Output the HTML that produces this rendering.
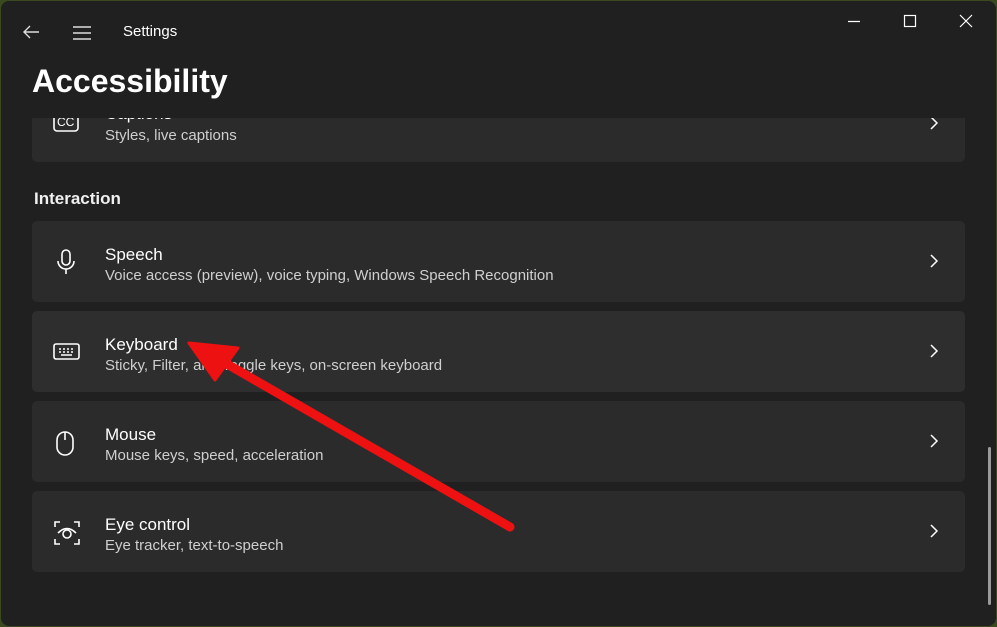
<!DOCTYPE html>
<html><head><style>
body{margin:0;width:997px;height:627px;background:#3b4a1e;font-family:"Liberation Sans",sans-serif;overflow:hidden;position:relative}
.win{position:absolute;left:1px;top:1px;width:995px;height:625px;background:#202020;border-radius:8px;overflow:hidden}
.t{position:absolute;color:#fff}
.card{position:absolute;left:31px;width:933px;height:81px;background:#2b2b2b;border-radius:5px}
.card .h{position:absolute;left:73px;top:24px;font-size:17px;color:#fff}
.card .s{position:absolute;left:73px;top:46px;font-size:15px;color:#cfcfcf}
.card .c{position:absolute;left:897px;top:32px}
.card .i{position:absolute;left:20px;top:27px}
</style></head><body>
<div class="win">
<div class="card" style="top:80px;height:81px"><svg class="i" style="top:28px" width="28" height="24" viewBox="0 0 28 24"><rect x="2" y="2" width="24" height="20" rx="3" fill="none" stroke="#fff" stroke-width="1.6"/><text x="5" y="17" fill="#fff" font-size="12" font-family="Liberation Sans">CC</text></svg>
<div class="h" style="top:23px">Captions</div>
<div class="s" style="top:46px">Styles, live captions</div><svg class="c" style="top:34px" width="10" height="16"><path d="M2 2l6 6-6 6" stroke="#fff" stroke-width="1.5" fill="none"/></svg></div>
<div style="position:absolute;left:0;top:0;width:995px;height:117px;background:#202020"></div>
<svg style="position:absolute;left:21px;top:23px" width="18" height="16"><path d="M17 8H2M8 2L2 8l6 6" stroke="#ddd" stroke-width="1.4" fill="none"/></svg>
<svg style="position:absolute;left:71px;top:24px" width="20" height="16"><path d="M1 2h18M1 8h18M1 14h18" stroke="#ddd" stroke-width="1.4"/></svg>
<div class="t" style="left:122px;top:22px;font-size:15px">Settings</div>
<svg style="position:absolute;left:846px;top:19px" width="14" height="4"><path d="M1 1.5h12" stroke="#fff" stroke-width="1.2"/></svg>
<svg style="position:absolute;left:902px;top:13px" width="14" height="14"><rect x="1.5" y="1.5" width="11" height="11" fill="none" stroke="#fff" stroke-width="1.2"/></svg>
<svg style="position:absolute;left:958px;top:13px" width="14" height="14"><path d="M1 1l12 12M13 1L1 13" stroke="#fff" stroke-width="1.2"/></svg>
<div class="t" style="left:31px;top:62px;font-size:32px;font-weight:bold">Accessibility</div>
<div class="t" style="left:33px;top:188px;font-size:17px;font-weight:bold;color:#f0f0f0">Interaction</div>
<div class="card" style="top:220px"><svg class="i" width="28" height="28" viewBox="0 0 28 28"><rect x="10" y="2" width="8" height="15" rx="4" fill="none" stroke="#fff" stroke-width="1.6"/><path d="M6 13a8 8 0 0016 0M14 21v5" stroke="#fff" stroke-width="1.6" fill="none"/></svg><div class="h">Speech</div><div class="s">Voice access (preview), voice typing, Windows Speech Recognition</div><svg class="c" width="10" height="16"><path d="M2 2l6 6-6 6" stroke="#fff" stroke-width="1.5" fill="none"/></svg></div>
<div class="card" style="top:310px;background:#2e2e2e"><svg class="i" style="left:21px;top:31px" width="28" height="20" viewBox="0 0 28 20"><rect x="1" y="2" width="25" height="15" rx="2" fill="none" stroke="#fff" stroke-width="1.6"/><path d="M6 7h2M10 7h2M14 7h2M18 7h2M6 10h2M10 10h2M14 10h2M18 10h2M8 13h11" stroke="#fff" stroke-width="1.4"/></svg><div class="h">Keyboard</div><div class="s">Sticky, Filter, and Toggle keys, on-screen keyboard</div><svg class="c" width="10" height="16"><path d="M2 2l6 6-6 6" stroke="#fff" stroke-width="1.5" fill="none"/></svg></div>
<div class="card" style="top:400px"><svg class="i" style="left:22px;top:29px" width="24" height="28" viewBox="0 0 24 28"><rect x="3" y="2" width="16" height="23" rx="8" fill="none" stroke="#fff" stroke-width="1.6"/><path d="M11 2v8" stroke="#fff" stroke-width="1.6"/></svg><div class="h">Mouse</div><div class="s">Mouse keys, speed, acceleration</div><svg class="c" width="10" height="16"><path d="M2 2l6 6-6 6" stroke="#fff" stroke-width="1.5" fill="none"/></svg></div>
<div class="card" style="top:490px"><svg class="i" style="left:21px;top:28px" width="28" height="28" viewBox="0 0 28 28"><path d="M2 8V3h5M21 3h5v5M26 20v5h-5M7 25H2v-5" stroke="#fff" stroke-width="1.6" fill="none"/><path d="M5 14q9-9 18 0" stroke="#fff" stroke-width="1.6" fill="none"/><circle cx="14" cy="15" r="4" fill="none" stroke="#fff" stroke-width="1.6"/></svg><div class="h">Eye control</div><div class="s">Eye tracker, text-to-speech</div><svg class="c" width="10" height="16"><path d="M2 2l6 6-6 6" stroke="#fff" stroke-width="1.5" fill="none"/></svg></div>
<div style="position:absolute;left:987px;top:446px;width:3px;height:158px;background:#9a9a9a;border-radius:2px"></div>
</div>
<svg style="position:absolute;left:0;top:0" width="997" height="627"><path d="M510 527L220 360" stroke="#ee1111" stroke-width="9" stroke-linecap="round"/><path d="M189 343L238 348L215 380Z" fill="#ee1111" stroke="#ee1111" stroke-width="3" stroke-linejoin="round"/></svg>
</body></html>
